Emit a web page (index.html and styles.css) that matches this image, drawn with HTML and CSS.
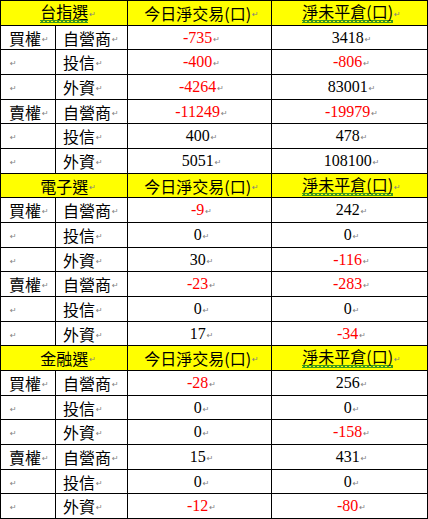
FILE: index.html
```html
<!DOCTYPE html>
<html lang="zh-Hant">
<head>
<meta charset="utf-8">
<link rel="stylesheet" href="styles.css">
</head>
<body>
<div class="sheet">
  <div class="row head"><div class="c hd first"><span class="wavy">台指選</span><span class="pm">↵</span></div><div class="c hd">今日淨交易(口)<span class="pm">↵</span></div><div class="c hd"><span class="wavy">淨未平倉(口)</span><span class="pm">↵</span></div></div>
  <div class="row"><div class="c lbl">買權<span class="pm">↵</span></div><div class="c lbl2">自營商<span class="pm">↵</span></div><div class="c num red">-735<span class="pm">↵</span></div><div class="c num">3418<span class="pm">↵</span></div></div>
  <div class="row"><div class="c lbl"><span class="pm">↵</span></div><div class="c lbl2">投信<span class="pm">↵</span></div><div class="c num red">-400<span class="pm">↵</span></div><div class="c num red">-806<span class="pm">↵</span></div></div>
  <div class="row"><div class="c lbl"><span class="pm">↵</span></div><div class="c lbl2">外資<span class="pm">↵</span></div><div class="c num red">-4264<span class="pm">↵</span></div><div class="c num">83001<span class="pm">↵</span></div></div>
  <div class="row"><div class="c lbl">賣權<span class="pm">↵</span></div><div class="c lbl2">自營商<span class="pm">↵</span></div><div class="c num red">-11249<span class="pm">↵</span></div><div class="c num red">-19979<span class="pm">↵</span></div></div>
  <div class="row"><div class="c lbl"><span class="pm">↵</span></div><div class="c lbl2">投信<span class="pm">↵</span></div><div class="c num">400<span class="pm">↵</span></div><div class="c num">478<span class="pm">↵</span></div></div>
  <div class="row"><div class="c lbl"><span class="pm">↵</span></div><div class="c lbl2">外資<span class="pm">↵</span></div><div class="c num">5051<span class="pm">↵</span></div><div class="c num">108100<span class="pm">↵</span></div></div>

  <div class="row head"><div class="c hd first">電子選<span class="pm">↵</span></div><div class="c hd">今日淨交易(口)<span class="pm">↵</span></div><div class="c hd"><span class="wavy">淨未平倉(口)</span><span class="pm">↵</span></div></div>
  <div class="row"><div class="c lbl">買權<span class="pm">↵</span></div><div class="c lbl2">自營商<span class="pm">↵</span></div><div class="c num red">-9<span class="pm">↵</span></div><div class="c num">242<span class="pm">↵</span></div></div>
  <div class="row"><div class="c lbl"><span class="pm">↵</span></div><div class="c lbl2">投信<span class="pm">↵</span></div><div class="c num">0<span class="pm">↵</span></div><div class="c num">0<span class="pm">↵</span></div></div>
  <div class="row"><div class="c lbl"><span class="pm">↵</span></div><div class="c lbl2">外資<span class="pm">↵</span></div><div class="c num">30<span class="pm">↵</span></div><div class="c num red">-116<span class="pm">↵</span></div></div>
  <div class="row"><div class="c lbl">賣權<span class="pm">↵</span></div><div class="c lbl2">自營商<span class="pm">↵</span></div><div class="c num red">-23<span class="pm">↵</span></div><div class="c num red">-283<span class="pm">↵</span></div></div>
  <div class="row"><div class="c lbl"><span class="pm">↵</span></div><div class="c lbl2">投信<span class="pm">↵</span></div><div class="c num">0<span class="pm">↵</span></div><div class="c num">0<span class="pm">↵</span></div></div>
  <div class="row"><div class="c lbl"><span class="pm">↵</span></div><div class="c lbl2">外資<span class="pm">↵</span></div><div class="c num">17<span class="pm">↵</span></div><div class="c num red">-34<span class="pm">↵</span></div></div>

  <div class="row head"><div class="c hd first">金融選<span class="pm">↵</span></div><div class="c hd">今日淨交易(口)<span class="pm">↵</span></div><div class="c hd"><span class="wavy">淨未平倉(口)</span><span class="pm">↵</span></div></div>
  <div class="row"><div class="c lbl">買權<span class="pm">↵</span></div><div class="c lbl2">自營商<span class="pm">↵</span></div><div class="c num red">-28<span class="pm">↵</span></div><div class="c num">256<span class="pm">↵</span></div></div>
  <div class="row"><div class="c lbl"><span class="pm">↵</span></div><div class="c lbl2">投信<span class="pm">↵</span></div><div class="c num">0<span class="pm">↵</span></div><div class="c num">0<span class="pm">↵</span></div></div>
  <div class="row"><div class="c lbl"><span class="pm">↵</span></div><div class="c lbl2">外資<span class="pm">↵</span></div><div class="c num">0<span class="pm">↵</span></div><div class="c num red">-158<span class="pm">↵</span></div></div>
  <div class="row"><div class="c lbl">賣權<span class="pm">↵</span></div><div class="c lbl2">自營商<span class="pm">↵</span></div><div class="c num">15<span class="pm">↵</span></div><div class="c num">431<span class="pm">↵</span></div></div>
  <div class="row"><div class="c lbl"><span class="pm">↵</span></div><div class="c lbl2">投信<span class="pm">↵</span></div><div class="c num">0<span class="pm">↵</span></div><div class="c num">0<span class="pm">↵</span></div></div>
  <div class="row"><div class="c lbl"><span class="pm">↵</span></div><div class="c lbl2">外資<span class="pm">↵</span></div><div class="c num red">-12<span class="pm">↵</span></div><div class="c num red">-80<span class="pm">↵</span></div></div>
</div>
</body>
</html>
```
FILE: styles.css
```css
html, body {
  margin: 0;
  padding: 0;
  background: #ffffff;
}
.sheet {
  box-sizing: border-box;
  width: 428px;
  height: 519px;
  padding: 1px;
  display: flex;
  flex-direction: column;
  gap: 1px;
  background: #000000;
  font-family: "Liberation Serif", "Noto Sans CJK TC", serif;
  font-size: 16px;
  color: #000000;
}
.row {
  flex: 1 1 0;
  min-height: 0;
  display: grid;
  grid-template-columns: 54px 71px 143px 155px;
  gap: 1px;
}
.row.head {
  grid-template-columns: 126px 143px 155px;
}
.c {
  background: #ffffff;
  display: flex;
  align-items: center;
  white-space: nowrap;
  line-height: 1;
  min-width: 0;
}
.hd {
  background: #ffff00;
  justify-content: center;
  padding-left: 4px;
  font-family: "Noto Sans CJK TC", sans-serif;
}
.hd.first {
  padding-left: 8px;
}
.num {
  justify-content: center;
  padding-left: 4px;
}
.lbl {
  padding-left: 8px;
  font-family: "Noto Sans CJK TC", sans-serif;
}
.lbl2 {
  padding-left: 7px;
  font-family: "Noto Sans CJK TC", sans-serif;
}
.red {
  color: #ff0000;
}
.wavy {
  padding-bottom: 4px;
  background-image:
    linear-gradient(45deg, transparent 35%, #3c9a20 35%, #3c9a20 60%, transparent 60%),
    linear-gradient(-45deg, transparent 35%, #3c9a20 35%, #3c9a20 60%, transparent 60%);
  background-size: 4px 3px;
  background-repeat: repeat-x;
  background-position: 0 100%;
}
.pm {
  font-family: "DejaVu Sans", sans-serif;
  font-size: 8px;
  color: #808080;
  margin-left: 1px;
  padding-top: 4px;
}
```
